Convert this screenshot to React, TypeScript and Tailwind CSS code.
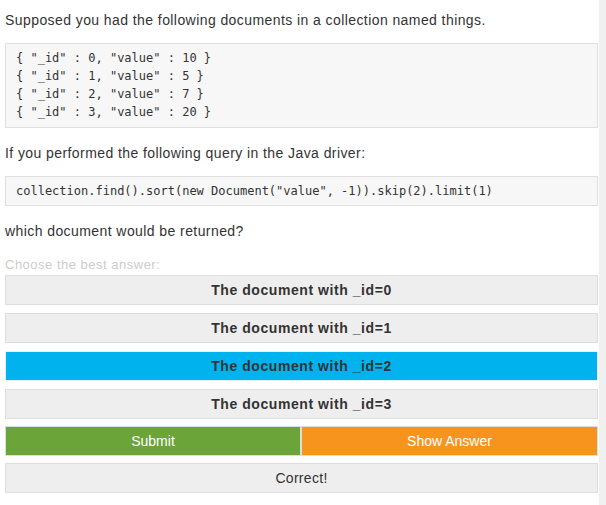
import React from "react";

const opts = [0, 1, 2, 3];

export default function App() {
  return (
    <div className="flex w-[606px] h-[505px] bg-white overflow-hidden" style={{ fontFamily: '"Liberation Sans", Arial, sans-serif' }}>
      <div className="w-[599px] pl-[5px] pr-[1px] pt-[10px] text-[#333333]">
        <p className="text-[14px] leading-[20px] tracking-[0.42px]">Supposed you had the following documents in a collection named things.</p>
        <pre
          className="mt-[13px] border border-[#e0e0e0] bg-[#f7f7f7] pl-[10px] pt-[5px] pb-[6px] text-[12px] leading-[18px] text-[#333333]"
          style={{ fontFamily: '"DejaVu Sans Mono", monospace' }}
        >
{`{ "_id" : 0, "value" : 10 }
{ "_id" : 1, "value" : 5 }
{ "_id" : 2, "value" : 7 }
{ "_id" : 3, "value" : 20 }`}
        </pre>
        <p className="mt-[15px] text-[14px] leading-[20px] tracking-[0.42px]">If you performed the following query in the Java driver:</p>
        <pre
          className="mt-[13px] border border-[#e0e0e0] bg-[#f7f7f7] pl-[10px] pt-[5px] pb-[5px] text-[12px] leading-[18px] text-[#333333]"
          style={{ fontFamily: '"DejaVu Sans Mono", monospace' }}
        >
{`collection.find().sort(new Document("value", -1)).skip(2).limit(1)`}
        </pre>
        <p className="mt-[15px] text-[14px] leading-[20px] tracking-[0.42px]">which document would be returned?</p>
        <p className="mt-[16px] text-[13px] leading-[16px] tracking-[0.5px] text-[#cccccc]">Choose the best answer:</p>
        <div className="mt-[2px] flex flex-col gap-[8px]">
          {opts.map((i) => (
            <div
              key={i}
              className={
                "h-[30px] flex items-center justify-center border text-[14px] font-bold tracking-[0.56px] " +
                (i === 2 ? "bg-[#00b3ee] border-[#dff4fc]" : "bg-[#eeeeee] border-[#dddddd]")
              }
            >
              The document with _id={i}
            </div>
          ))}
        </div>
        <div className="mt-[7px] flex h-[30px]">
          <div className="w-[296px] flex items-center justify-center border border-[#dddddd] bg-[#6ba438] text-[14px] text-white">Submit</div>
          <div className="flex-1 flex items-center justify-center border border-[#dddddd] bg-[#f7941e] text-[14px] text-white">Show Answer</div>
        </div>
        <div className="mt-[7px] h-[30px] flex items-center justify-center border border-[#dddddd] bg-[#eeeeee] text-[14px] tracking-[0.3px]">Correct!</div>
      </div>
      <div className="w-[7px] h-full bg-[#f0f0f0]" />
    </div>
  );
}
